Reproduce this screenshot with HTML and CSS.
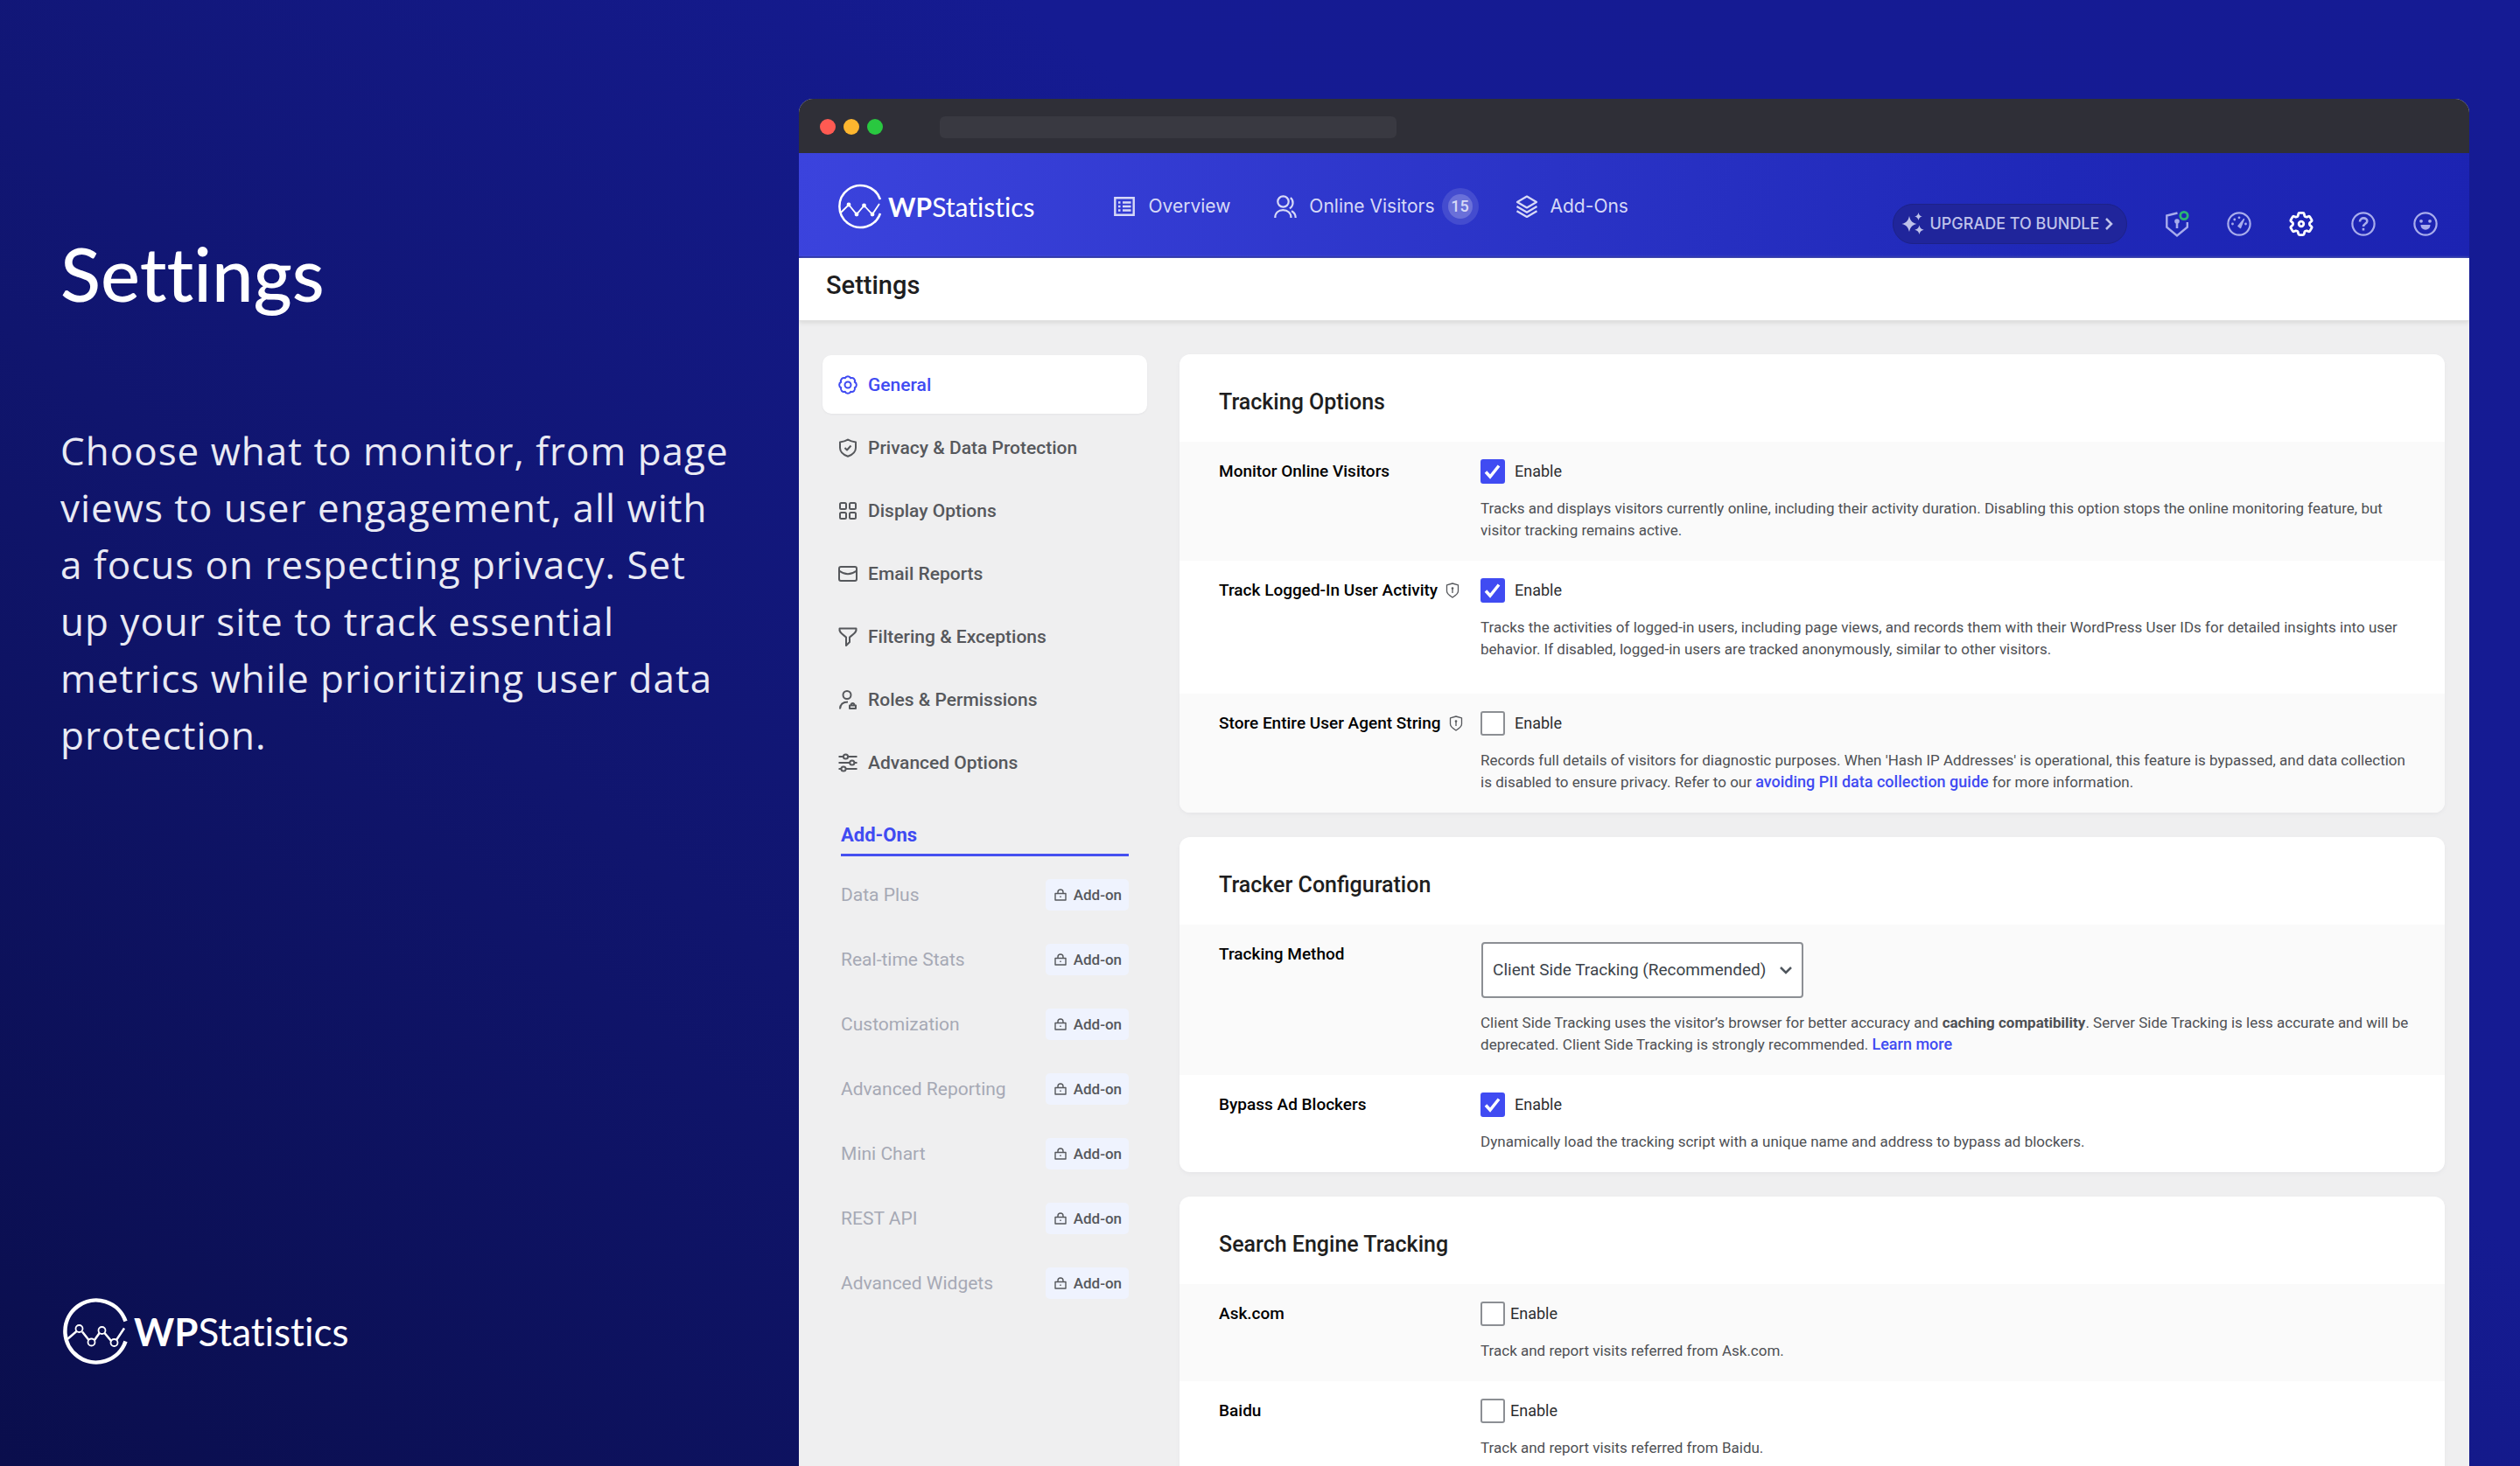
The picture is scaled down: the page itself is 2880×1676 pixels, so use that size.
FILE: index.html
```html
<!DOCTYPE html>
<html lang="en">
<head>
<meta charset="utf-8">
<meta name="viewport" content="width=device-width, initial-scale=1">
<title>WP Statistics – Settings</title>
<link rel="stylesheet" href="styles.css">
</head>
<body>
<svg class="sprite" aria-hidden="true">
  <symbol id="logo-mark" viewBox="0 0 76 76">
    <path d="M71.5 26.500A35.500 35.500 0 1 0 71.500 49.500" fill="none" stroke="currentColor" stroke-width="4.500"/>
    <path d="M5 47 15.500 38M22 38.500 29.500 48M36 48 42 39.500M47.500 40 55.500 49.500M61 48 70 34.500" fill="none" stroke="currentColor" stroke-width="2.500"/>
    <g fill="none" stroke="currentColor" stroke-width="1.800"><circle cx="18.500" cy="35" r="4"/><circle cx="32.500" cy="50.500" r="4"/><circle cx="44.500" cy="37" r="4"/><circle cx="58.500" cy="51" r="4"/></g>
  </symbol>
  <symbol id="logo-mark-small" viewBox="0 0 52 52">
    <path d="M49 18A24 24 0 1 0 49 34" fill="none" stroke="currentColor" stroke-width="2.500"/>
    <path d="M4 33 13 24 22 35 30.500 25 40 35 48 23" fill="none" stroke="currentColor" stroke-width="1.800"/>
    <g fill="currentColor"><circle cx="13" cy="24" r="2.400"/><circle cx="22" cy="35" r="2.400"/><circle cx="30.500" cy="25" r="2.400"/><circle cx="40" cy="35" r="2.400"/></g>
  </symbol>
  <symbol id="lock" viewBox="0 0 14 14">
    <path d="M1 5.500h12v7.500H1zM4 5.500V4a3 3 0 0 1 6 0v1.500M7 8.500v1.500" fill="none" stroke="currentColor" stroke-width="1.400" stroke-linejoin="round"/>
  </symbol>
  <symbol id="privacy" viewBox="0 0 16 18">
    <path d="M1.500 2.800 8 1l6.500 1.800v7c0 3.200-2.800 5-6.500 7.200-3.700-2.200-6.500-4-6.500-7.200zM8 6v6" fill="none" stroke="currentColor" stroke-width="1.300" stroke-linejoin="round"/>
    <circle cx="8" cy="6.500" r="1.300" fill="currentColor"/>
  </symbol>
</svg>

<div class="stage">
  <aside class="intro">
    <h1 class="intro-title">Settings</h1>
    <p class="intro-text">Choose what to monitor, from page views to user engagement, all with a focus on respecting privacy. Set up your site to track essential metrics while prioritizing user data protection.</p>
    <div class="brand brand-large">
      <svg class="brand-mark"><use href="#logo-mark"/></svg>
      <span class="brand-name"><b>WP</b>Statistics</span>
    </div>
  </aside>

  <div class="window">
    <div class="titlebar">
      <span class="dot dot-red"></span><span class="dot dot-yellow"></span><span class="dot dot-green"></span>
      <span class="address"></span>
    </div>

    <header class="topbar">
      <a class="brand" href="#">
        <svg class="brand-mark"><use href="#logo-mark-small"/></svg>
        <span class="brand-name"><b>WP</b>Statistics</span>
      </a>
      <nav class="nav">
        <a class="nav-link" href="#">
          <svg class="nav-icon" viewBox="0 0 26 26"><path d="M2.300 3.300h21.400v19.400H2.300z" fill="none" stroke="currentColor" stroke-width="2.400"/><path d="M6 8.500h2.500M6 13h2.500M6 17.500h2.500M11 8.500h9.500M11 13h9.500M11 17.500h9.500" stroke="currentColor" stroke-width="2.400"/></svg>
          Overview
        </a>
        <a class="nav-link" href="#">
          <svg class="nav-icon" viewBox="0 0 26 26" fill="none" stroke="currentColor" stroke-width="2.200"><circle cx="10.500" cy="7.500" r="6.200"/><path d="M1.300 26c0-5.500 3.700-8.800 9-8.800s9.200 3.300 9.200 8.800M18.800 3.200c3.800 2.600 3.800 9.600-1 12M20 18.200c3.200 1.600 4.700 4.200 4.700 7.800"/></svg>
          Online Visitors
          <span class="count"><span class="count-value">15</span></span>
        </a>
        <a class="nav-link" href="#">
          <svg class="nav-icon" viewBox="0 0 26 26" fill="none" stroke="currentColor" stroke-width="2.200" stroke-linejoin="round"><path d="M13 1.500 24 8l-11 6.500L2 8zM1.500 13 13 19.800 24.500 13M1.500 18.200 13 25l11.500-6.800"/></svg>
          Add-Ons
        </a>
      </nav>
      <div class="tools">
        <a class="upgrade" href="#">
          <svg class="upgrade-icon" viewBox="0 0 26 26" fill="currentColor"><path d="M9 4c1.200 5.200 3.300 7.600 8.500 9-5.200 1.400-7.300 3.800-8.500 9-1.200-5.200-3.300-7.600-8.500-9C5.700 11.600 7.800 9.200 9 4zM19.500 0c.6 2.700 1.600 3.800 4.300 4.500-2.700.7-3.700 1.800-4.300 4.500-.6-2.700-1.600-3.800-4.300-4.500 2.700-.7 3.700-1.800 4.300-4.500zM20.500 14.500c.7 3 2 4.500 5.200 5.300-3.200.8-4.500 2.300-5.200 5.300-.7-3-2-4.500-5.200-5.300 3.200-.8 4.500-2.300 5.200-5.300z"/></svg>
          <span>UPGRADE TO BUNDLE</span>
          <svg class="upgrade-arrow" viewBox="0 0 10 14"><path d="m2 1 6 6-6 6" fill="none" stroke="currentColor" stroke-width="2.500"/></svg>
        </a>
        <a class="tool" href="#" aria-label="Privacy audit"><svg viewBox="0 0 28 28" fill="none"><path d="M14.500 1.500 2.300 4.500v13.200L14 27.500l11.800-9.800V12" stroke="currentColor" stroke-width="2.400"/><path d="M14 11v8" stroke="currentColor" stroke-width="2.600"/><circle cx="14" cy="11" r="2.800" fill="currentColor"/><circle cx="22" cy="4.500" r="4.200" stroke="#2bb673" stroke-width="2.800"/></svg></a>
        <a class="tool" href="#" aria-label="Optimization"><svg viewBox="0 0 28 28" fill="none"><circle cx="14" cy="14" r="12.600" stroke="currentColor" stroke-width="2.200"/><path d="m13 16.500 6.500-8-4 10z" fill="currentColor" stroke="currentColor" stroke-width="1.500" stroke-linejoin="round"/><g fill="currentColor"><circle cx="6.500" cy="14" r="1.400"/><circle cx="8.800" cy="9" r="1.400"/><circle cx="14" cy="6.800" r="1.400"/><circle cx="21.500" cy="14" r="1.400"/></g></svg></a>
        <a class="tool tool-active" href="#" aria-label="Settings"><svg viewBox="2 2 20 20" fill="none" stroke="currentColor" stroke-width="2"><path d="M9.594 3.940c.09-.542.56-.94 1.110-.94h2.593c.55 0 1.020.398 1.110.94l.213 1.281c.063.374.313.686.645.87.074.04.147.083.22.127.325.196.72.257 1.075.124l1.217-.456a1.125 1.125 0 0 1 1.370.49l1.296 2.247a1.125 1.125 0 0 1-.26 1.431l-1.003.827c-.293.241-.438.613-.43.992a7.723 7.723 0 0 1 0 .255c-.008.378.137.75.43.991l1.004.827c.424.35.534.955.26 1.430l-1.298 2.247a1.125 1.125 0 0 1-1.369.491l-1.217-.456c-.355-.133-.75-.072-1.076.124a6.470 6.470 0 0 1-.22.128c-.331.183-.581.495-.644.869l-.213 1.281c-.09.543-.56.94-1.110.94h-2.594c-.55 0-1.019-.398-1.110-.94l-.213-1.281c-.062-.374-.312-.686-.644-.87a6.520 6.520 0 0 1-.22-.127c-.325-.196-.72-.257-1.076-.124l-1.217.456a1.125 1.125 0 0 1-1.369-.49l-1.297-2.247a1.125 1.125 0 0 1 .26-1.431l1.004-.827c.292-.24.437-.613.43-.991a6.932 6.932 0 0 1 0-.255c.007-.38-.138-.751-.43-.992l-1.004-.827a1.125 1.125 0 0 1-.26-1.430l1.297-2.247a1.125 1.125 0 0 1 1.370-.491l1.216.456c.356.133.751.072 1.076-.124.072-.044.146-.086.22-.128.332-.183.582-.495.644-.869z"/><circle cx="12" cy="12" r="2"/></svg></a>
        <a class="tool" href="#" aria-label="Help"><svg viewBox="0 0 28 28" fill="none" stroke="currentColor" stroke-width="2.200"><circle cx="14" cy="14" r="12.600"/><path d="M10 11.500C10 6 18.500 6.200 18.300 11c-.1 2.700-4.300 2.900-4.300 6M14 18.800v2.600" stroke-width="2.600"/></svg></a>
        <a class="tool" href="#" aria-label="Feedback"><svg viewBox="0 0 28 28" fill="none"><circle cx="14" cy="14" r="12.600" stroke="currentColor" stroke-width="2.200"/><path d="M8.500 15h11c0 7.500-11 7.500-11 0z" fill="currentColor"/><circle cx="9" cy="10.800" r="1.900" fill="currentColor"/><circle cx="19" cy="10.800" r="1.900" fill="currentColor"/></svg></a>
      </div>
    </header>

    <h2 class="page-title">Settings</h2>

    <div class="content">
      <nav class="sidebar">
        <ul class="tabs">
          <li><a class="tab tab-active" href="#"><svg class="tab-icon" viewBox="0 0 22 22"><path d="M18.760 14.210a3.500 3.500 0 0 1-4.550 4.550 3.500 3.500 0 0 1-6.420 0 3.500 3.500 0 0 1-4.550-4.550 3.500 3.500 0 0 1 0-6.420 3.500 3.500 0 0 1 4.550-4.550 3.500 3.500 0 0 1 6.420 0 3.500 3.500 0 0 1 4.550 4.550 3.500 3.500 0 0 1 0 6.420z"/><circle cx="11" cy="11" r="3.500"/></svg>General</a></li>
          <li><a class="tab" href="#"><svg class="tab-icon" viewBox="0 0 22 22"><path d="M11 1.500c2.500 1.800 5.200 2.600 9 3v6.500c0 5-4 8-9 9.800-5-1.800-9-4.800-9-9.800V4.500c3.800-.4 6.500-1.200 9-3zM7.500 11l2.500 2.500 4.500-5"/></svg>Privacy &amp; Data Protection</a></li>
          <li><a class="tab" href="#"><svg class="tab-icon" viewBox="0 0 22 22"><rect x="2" y="2" width="7" height="7" rx="1.500"/><rect x="13" y="2" width="7" height="7" rx="1.500"/><rect x="2" y="13" width="7" height="7" rx="1.500"/><rect x="13" y="13" width="7" height="7" rx="1.500"/></svg>Display Options</a></li>
          <li><a class="tab" href="#"><svg class="tab-icon" viewBox="0 0 22 22"><rect x="1" y="3" width="20" height="16" rx="2"/><path d="M1 7.500c7 5.200 13 5.200 20 0"/></svg>Email Reports</a></li>
          <li><a class="tab" href="#"><svg class="tab-icon" viewBox="0 0 22 22"><path d="M1.500 1.500h19c1 4.500-3.500 6.500-7.500 10v5.500L9 21v-9.500c-4-3.500-8.500-5.500-7.500-10z"/></svg>Filtering &amp; Exceptions</a></li>
          <li><a class="tab" href="#"><svg class="tab-icon" viewBox="0 0 22 22"><circle cx="10" cy="5.500" r="4.500"/><path d="M2 21.500c.2-5.500 4-8 9-8M13 17.500h7v3.500h-7zM14.500 17.500c0-3.500 4-3.500 4 0" /></svg>Roles &amp; Permissions</a></li>
          <li><a class="tab" href="#"><svg class="tab-icon" viewBox="0 0 22 22"><path d="M.5 4H6M11 4h10.500M.5 11h12.500M18.500 11h3M.5 18H3.500M9 18h12.500"/><circle cx="8.500" cy="4" r="2.600"/><circle cx="15.800" cy="11" r="2.600"/><circle cx="6" cy="18" r="2.600"/></svg>Advanced Options</a></li>
        </ul>
        <section class="addons">
          <h3 class="addons-title">Add-Ons</h3>
          <ul class="addons-list">
            <li><a class="addon" href="#">Data Plus<span class="badge"><svg class="badge-icon"><use href="#lock"/></svg>Add-on</span></a></li>
            <li><a class="addon" href="#">Real-time Stats<span class="badge"><svg class="badge-icon"><use href="#lock"/></svg>Add-on</span></a></li>
            <li><a class="addon" href="#">Customization<span class="badge"><svg class="badge-icon"><use href="#lock"/></svg>Add-on</span></a></li>
            <li><a class="addon" href="#">Advanced Reporting<span class="badge"><svg class="badge-icon"><use href="#lock"/></svg>Add-on</span></a></li>
            <li><a class="addon" href="#">Mini Chart<span class="badge"><svg class="badge-icon"><use href="#lock"/></svg>Add-on</span></a></li>
            <li><a class="addon" href="#">REST API<span class="badge"><svg class="badge-icon"><use href="#lock"/></svg>Add-on</span></a></li>
            <li><a class="addon" href="#">Advanced Widgets<span class="badge"><svg class="badge-icon"><use href="#lock"/></svg>Add-on</span></a></li>
          </ul>
        </section>
      </nav>

      <form class="cards">
        <section class="card">
          <h3 class="card-title">Tracking Options</h3>
          <div class="row">
            <label class="row-label" for="online">Monitor Online Visitors</label>
            <div class="field">
              <label class="check"><input type="checkbox" id="online" checked>Enable</label>
              <p class="help">Tracks and displays visitors currently online, including their activity duration. Disabling this option stops the online monitoring feature, but visitor tracking remains active.</p>
            </div>
          </div>
          <div class="row row-tall">
            <label class="row-label" for="logged-in">Track Logged-In User Activity<svg class="privacy-icon"><use href="#privacy"/></svg></label>
            <div class="field">
              <label class="check"><input type="checkbox" id="logged-in" checked>Enable</label>
              <p class="help">Tracks the activities of logged-in users, including page views, and records them with their WordPress User IDs for detailed insights into user behavior. If disabled, logged-in users are tracked anonymously, similar to other visitors.</p>
            </div>
          </div>
          <div class="row">
            <label class="row-label" for="user-agent">Store Entire User Agent String<svg class="privacy-icon"><use href="#privacy"/></svg></label>
            <div class="field">
              <label class="check"><input type="checkbox" id="user-agent">Enable</label>
              <p class="help">Records full details of visitors for diagnostic purposes. When 'Hash IP Addresses' is operational, this feature is bypassed, and data collection is disabled to ensure privacy. Refer to our <a href="#">avoiding PII data collection guide</a> for more information.</p>
            </div>
          </div>
        </section>

        <section class="card">
          <h3 class="card-title">Tracker Configuration</h3>
          <div class="row">
            <label class="row-label" for="method">Tracking Method</label>
            <div class="field">
              <select class="select" id="method"><option>Client Side Tracking (Recommended)</option><option>Server Side Tracking</option></select>
              <p class="help">Client Side Tracking uses the visitor’s browser for better accuracy and <b>caching compatibility</b>. Server Side Tracking is less accurate and will be deprecated. Client Side Tracking is strongly recommended. <a href="#">Learn more</a></p>
            </div>
          </div>
          <div class="row">
            <label class="row-label" for="bypass">Bypass Ad Blockers</label>
            <div class="field">
              <label class="check"><input type="checkbox" id="bypass" checked>Enable</label>
              <p class="help">Dynamically load the tracking script with a unique name and address to bypass ad blockers.</p>
            </div>
          </div>
        </section>

        <section class="card card-compact">
          <h3 class="card-title">Search Engine Tracking</h3>
          <div class="row">
            <label class="row-label" for="ask">Ask.com</label>
            <div class="field">
              <label class="check"><input type="checkbox" id="ask">Enable</label>
              <p class="help">Track and report visits referred from Ask.com.</p>
            </div>
          </div>
          <div class="row">
            <label class="row-label" for="baidu">Baidu</label>
            <div class="field">
              <label class="check"><input type="checkbox" id="baidu">Enable</label>
              <p class="help">Track and report visits referred from Baidu.</p>
            </div>
          </div>
        </section>
      </form>
    </div>
  </div>
</div>
</body>
</html>
```

FILE: styles.css
```css
*, *::before, *::after { box-sizing: border-box; }

body {
  margin: 0;
  font-family: Roboto, "Liberation Sans", sans-serif;
  font-size: 20px;
  color: #1e1e20;
}

h1, h2, h3, p, ul { margin: 0; padding: 0; }
ul { list-style: none; }
a { color: inherit; text-decoration: none; }
svg { display: block; flex: none; }
.sprite { position: absolute; width: 0; height: 0; }

.stage {
  display: grid;
  grid-template-columns: 32.35% minmax(0, 1fr);
  height: 100vh;
  overflow: hidden;
  padding-right: 2%;
  background: linear-gradient(40deg, #0a0e4c 0%, #10156e 32%, #151b92 65%, #151b94 100%);
}

/* Left panel */
.intro {
  display: flex;
  flex-direction: column;
  height: 100vh;
  padding: 262px 75px 116px 69px;
  color: #fff;
}
.intro-title {
  font: 500 85px/100px Lato, sans-serif;
  font-variant-ligatures: none;
}
.intro-text {
  margin-top: 121px;
  font: 400 44px/65px "Open Sans", sans-serif;
  letter-spacing: 1px;
  color: #e9eaf4;
}

.brand { display: flex; align-items: center; gap: 6px; color: #fff; }
.brand-mark { width: 52px; height: 52px; }
.brand-name { font: 400 30px/40px Lato, sans-serif; font-variant-ligatures: none; }
.brand-name b { font-weight: 700; }
.brand-large { margin-top: auto; gap: 5px; padding-left: 3px; }
.brand-large .brand-mark { width: 76px; height: 76px; }
.brand-large .brand-name { font-size: 44px; line-height: 56px; }

/* Browser window */
.window {
  margin-top: 113px;
  border-radius: 16px 16px 0 0;
  overflow: hidden;
  background: #efeff0;
}
.titlebar {
  display: flex;
  align-items: center;
  gap: 9px;
  height: 62px;
  padding: 2px 24px 0;
  background: #2f2f37;
}
.dot { width: 18px; height: 18px; border-radius: 50%; }
.dot-red { background: #ff5a52; }
.dot-yellow { background: #fdb62f; }
.dot-green { background: #29c840; }
.address { width: 522px; height: 25px; margin-left: 56px; border-radius: 6px; background: #393941; }

.topbar {
  display: flex;
  align-items: center;
  height: 120px;
  padding: 3px 36px 0 44px;
  background: linear-gradient(100deg, #3b43dd 0%, #2a33c6 45%, #1f28b8 75%, #1c23b2 100%);
  border-bottom: 2px solid #2029a8;
}
.nav { display: flex; gap: 42px; margin-left: 90px; }
.nav-link {
  display: flex;
  align-items: center;
  gap: 14px;
  font: 400 21px/42px Inter, sans-serif;
  color: #d7d9f7;
}
.nav-link:first-child { margin-right: 8px; }
.nav-icon { width: 26px; height: 26px; }
.count {
  display: grid;
  place-items: center;
  width: 42px;
  height: 42px;
  margin-left: -6px;
  border-radius: 50%;
  background: #444ccf;
}
.count-value {
  width: 28px;
  height: 28px;
  border-radius: 50%;
  background: #6a70d9;
  font: 500 18px/28px Roboto, sans-serif;
  text-align: center;
}
.tools {
  display: flex;
  align-items: center;
  gap: 43px;
  margin-left: auto;
  padding-top: 40px;
  color: #a8acec;
}
.upgrade {
  display: flex;
  align-items: center;
  gap: 6px;
  height: 46px;
  padding: 0 15px 0 9px;
  border: 1px solid #1d2287;
  border-radius: 23px;
  background: #20259b;
  font: 500 18px/24px Inter, sans-serif;
  color: #bfc2ea;
}
.upgrade-icon { width: 26px; height: 26px; }
.upgrade-arrow { width: 10px; height: 14px; }
.tool svg { width: 28px; height: 28px; overflow: visible; }
.tool-active { color: #fff; }

.page-title {
  padding: 11px 31px 20px;
  font-size: 29px;
  line-height: 40px;
  font-weight: 500;
  background: #fff;
  border-bottom: 1px solid #e2e2e2;
  box-shadow: 0 2px 5px #d8d8d8;
}

.content { display: flex; align-items: flex-start; gap: 37px; padding: 38px 28px 38px 27px; }

/* Sidebar */
.sidebar { flex: none; width: 371px; padding-top: 1px; }
.tabs { display: flex; flex-direction: column; gap: 5px; }
.tab {
  display: flex;
  align-items: center;
  gap: 12px;
  height: 67px;
  padding: 0 18px;
  border-radius: 10px;
  font-weight: 500;
  font-size: 21px;
  line-height: 28px;
  color: #56585c;
}
.tab-active { background: #fff; color: #404bf2; box-shadow: 0 1px 2px #e4e4e6; }
.tab-icon { width: 22px; height: 22px; overflow: visible; fill: none; stroke: currentColor; stroke-width: 2; stroke-linejoin: round; }

.addons { padding: 36px 21px 0; }
.addons-title {
  padding-bottom: 7px;
  border-bottom: 3px solid #4650f0;
  font-size: 22px;
  line-height: 28px;
  font-weight: 700;
  color: #404bf2;
}
.addons-list { display: flex; flex-direction: column; gap: 38px; padding-top: 26px; }
.addon {
  display: flex;
  align-items: center;
  justify-content: space-between;
  font-size: 21px;
  line-height: 36px;
  color: #a6a9b5;
}
.badge {
  display: flex;
  align-items: center;
  gap: 8px;
  padding: 0 8px 0 10px;
  border-radius: 5px;
  background: #eff3fe;
  font-size: 17px;
  font-weight: 500;
  color: #56585c;
}
.badge-icon { width: 14px; height: 14px; }

/* Settings cards */
.cards { flex: 1; min-width: 0; display: flex; flex-direction: column; gap: 28px; }
.card { border-radius: 12px; background: #fff; overflow: hidden; box-shadow: 0 2px 4px #e6e6e8; }
.card-title { padding: 35px 45px 25px; font-size: 25px; line-height: 40px; font-weight: 500; }
.row {
  display: grid;
  grid-template-columns: 299px minmax(0, 1fr);
  padding: 20px 32px 22px 45px;
}
.row:nth-child(even) { background: #fafafa; }
.row-tall { padding-bottom: 38px; }
.row-label {
  display: flex;
  align-items: center;
  align-self: start;
  gap: 9px;
  font-size: 19px;
  line-height: 28px;
  font-weight: 500;
  color: #000;
}
.privacy-icon { width: 16px; height: 18px; color: #56585c; }
.check {
  display: flex;
  align-items: center;
  gap: 11px;
  width: fit-content;
  font-size: 18px;
  line-height: 28px;
  color: #2c2d30;
}
.card-compact .check { gap: 6px; }
.check input {
  appearance: none;
  width: 28px;
  height: 28px;
  margin: 0;
  border: 2px solid #8c8f94;
  border-radius: 3px;
  background: #fff center / 28px no-repeat;
}
.check input:checked {
  border-color: #404bf2;
  background-color: #404bf2;
  background-image: url("data:image/svg+xml,%3Csvg xmlns='http://www.w3.org/2000/svg' viewBox='0 0 28 28'%3E%3Cpath d='M6 14.500l5 5.500L21 7.500' fill='none' stroke='white' stroke-width='3.500'/%3E%3C/svg%3E");
}
.help {
  margin-top: 16px;
  font-size: 17px;
  line-height: 25px;
  color: #4e5054;
}
.help a { color: #404bf2; font-size: 18px; line-height: 20px; font-weight: 500; }
.help b { font-weight: 700; }
.select {
  appearance: none;
  display: block;
  width: 368px;
  height: 64px;
  margin-left: 1px;
  padding: 0 28px 0 11px;
  border: 2px solid #8c8f94;
  border-radius: 4px;
  background: #fff url("data:image/svg+xml,%3Csvg xmlns='http://www.w3.org/2000/svg' viewBox='0 0 16 16'%3E%3Cpath d='M2 5l6 6 6-6' fill='none' stroke='%2350575e' stroke-width='2.500'/%3E%3C/svg%3E") right 10px center / 16px no-repeat;
  font: 400 19px/28px Roboto, sans-serif;
  color: #3c434a;
}
```
